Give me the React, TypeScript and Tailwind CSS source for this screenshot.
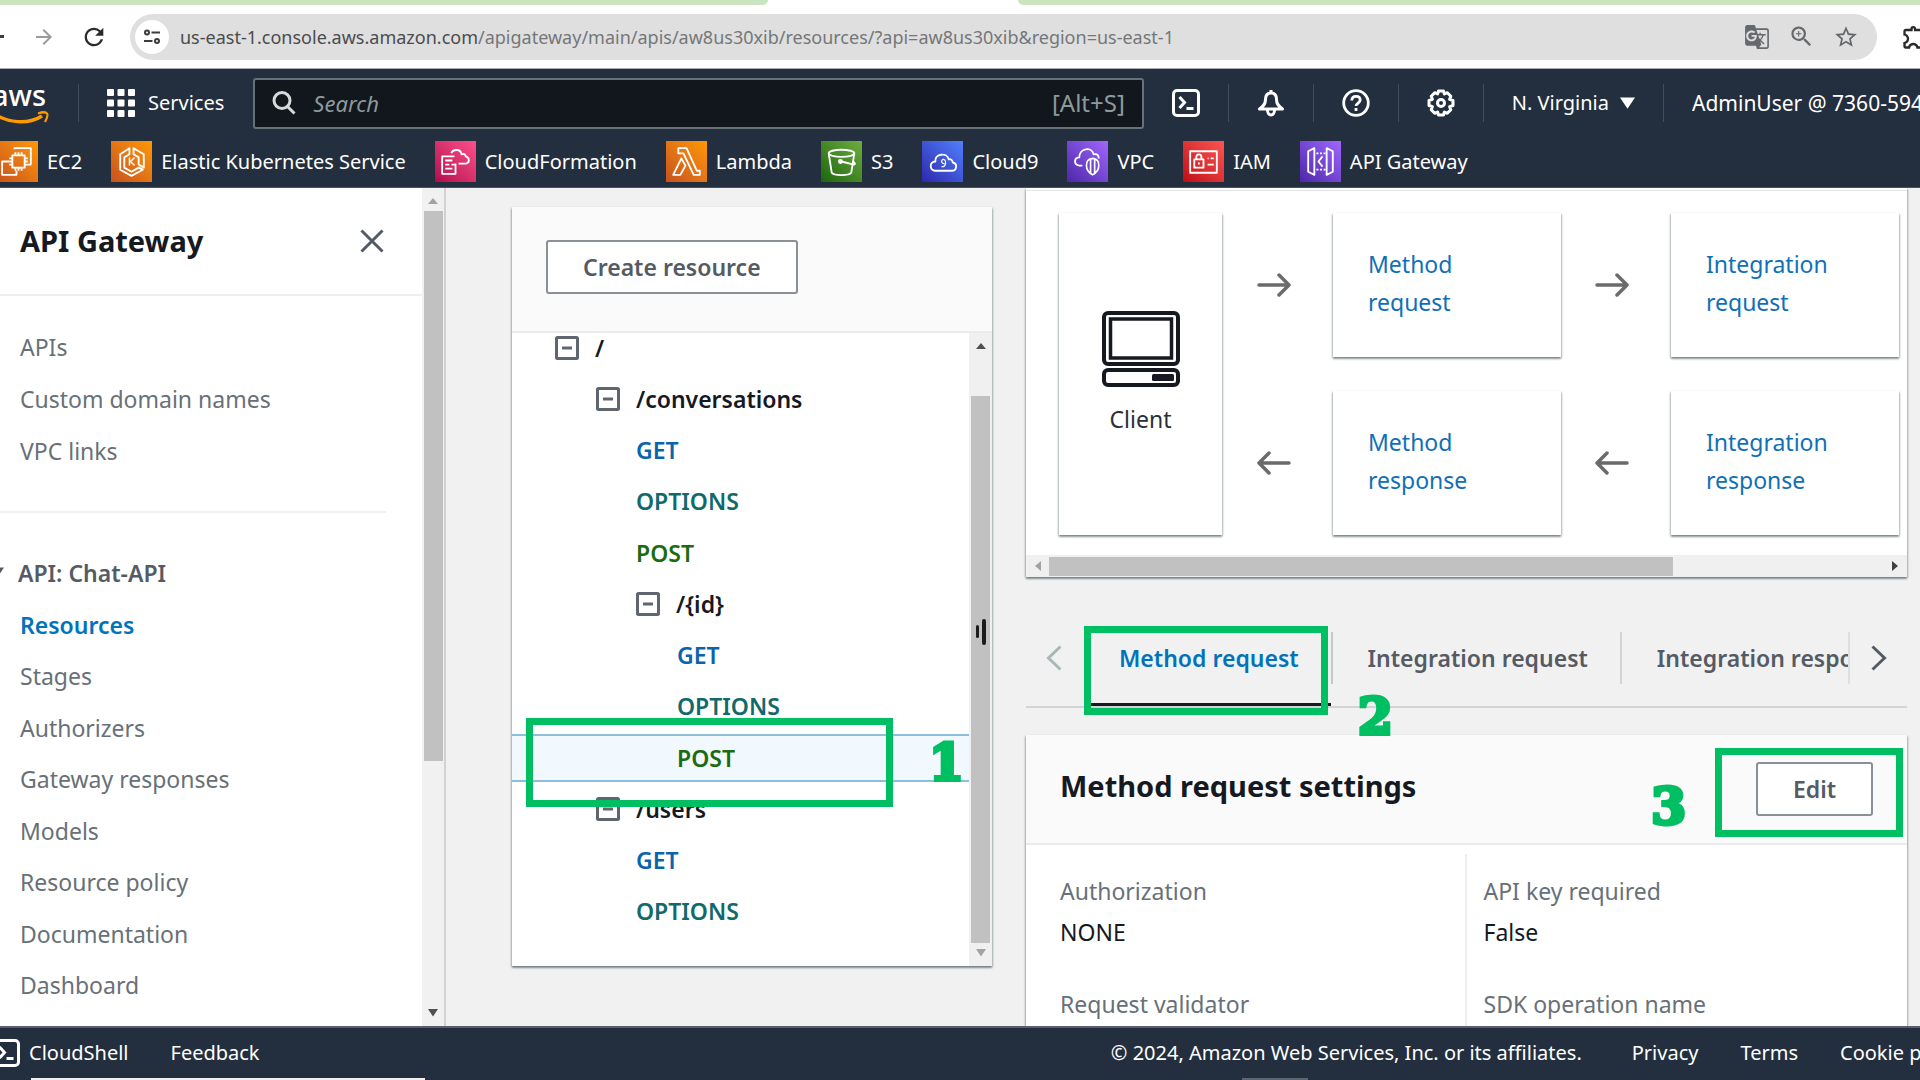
import React from 'react';
import {
  MdArrowForward,
  MdGTranslate,
  MdOutlineExtension,
  MdRefresh,
  MdStarOutline,
  MdZoomIn,
} from 'react-icons/md';

type IconProps = { className?: string };

/* ---------- icons ---------- */

const TuneIcon = () => (
  <svg viewBox="0 0 18 18" className="size-[18px]" fill="none" stroke="#3c3c3c" strokeWidth="2">
    <circle cx="4" cy="4.5" r="2" />
    <path d="M8.5 4.5H17" />
    <path d="M1 13h8.500" />
    <circle cx="14" cy="13" r="2" />
  </svg>
);

const ShellIcon = ({ className }: IconProps) => (
  <svg viewBox="0 0 28 28" className={className} fill="none" stroke="currentColor" strokeWidth="3">
    <rect x="1.500" y="1.500" width="25" height="25" rx="3.500" />
    <path d="M7.500 8l5 5.500-5 5.500" />
    <path d="M14.500 19.500h7" />
  </svg>
);

const BellIcon = () => (
  <svg viewBox="0 0 28 28" className="size-[28px]" fill="none" stroke="currentColor" strokeWidth="3" strokeLinejoin="round">
    <path d="M14 1v3" />
    <path d="M14 4c-4 0-5.500 3-5.500 6.500 0 4.500-2 6.500-6 9.500h23c-4-3-6-5-6-9.500C19.500 7 18 4 14 4z" />
    <path d="M10.500 21c0 3 1.500 5 3.500 5s3.500-2 3.500-5" />
  </svg>
);

const HelpIcon = () => (
  <svg viewBox="0 0 28 28" className="size-[28px]" fill="none" stroke="currentColor" strokeWidth="2.800">
    <circle cx="14" cy="14" r="12.300" />
    <path d="M9.800 11.500c0-2.500 1.700-4.200 4.200-4.200s4.200 1.500 4.200 3.800c0 2.900-4.200 3-4.200 6" />
    <path d="M14 19v3" />
  </svg>
);

const GearIcon = () => (
  <svg viewBox="0 0 28 28" className="size-[28px]" fill="none" stroke="currentColor" strokeWidth="3" strokeLinejoin="round">
    <path d="M11.500 2h5l.9 3 2.900-1.300 3.500 3.500L22.600 10.300l3.400 1.200v5l-3.400 1.200 1.200 3.100-3.500 3.500-2.900-1.300-.9 3h-5l-.9-3-2.900 1.300-3.500-3.500 1.200-3.100L2 16.500v-5l3.400-1.200-1.200-3.100 3.500-3.500L10.600 5z" />
    <circle cx="14" cy="14" r="3.500" />
  </svg>
);

const SearchIcon = () => (
  <svg viewBox="0 0 24 24" className="size-[24px] shrink-0" fill="none" stroke="#d5dbdb" strokeWidth="3">
    <circle cx="10" cy="9.500" r="8" />
    <path d="M15.500 15.500l7 7" />
  </svg>
);

const GridIcon = () => (
  <svg viewBox="0 0 28 28" className="size-[28px]" fill="currentColor">
    {[0, 10.500, 21].map((y) =>
      [0, 10.500, 21].map((x) => <rect key={`${x}-${y}`} x={x} y={y} width="7" height="7" rx="1" />),
    )}
  </svg>
);

const Caret = ({ dir, className }: { dir: 'up' | 'down' | 'left' | 'right'; className: string }) => {
  const d = {
    up: 'M0 8L5 2l5 6z',
    down: 'M0 1l5 7.500L10 1z',
    left: 'M8 0L2 5l6 5z',
    right: 'M2 0l6 5-6 5z',
  }[dir];
  return (
    <svg viewBox="0 0 10 10" className={className} fill="currentColor">
      <path d={d} />
    </svg>
  );
};

const Chevron = ({ flip }: { flip?: boolean }) => (
  <svg viewBox="0 0 16 26" className="h-[26px] w-[16px]" fill="none" stroke="currentColor" strokeWidth="3">
    <path d={flip ? 'M14.500 1.500L2.500 13l12 11.500' : 'M1.500 1.500l12 11.500-12 11.500'} />
  </svg>
);

const FlowArrow = ({ back }: { back?: boolean }) => (
  <svg viewBox="0 0 34 24" className="h-[24px] w-[34px]" fill="none" stroke="#6b6b6b" strokeWidth="3.500" strokeLinecap="round" strokeLinejoin="round">
    <path d={back ? 'M32 12H2M12 2L2 12l10 10' : 'M2 12h30M22 2l10 10-10 10'} />
  </svg>
);

const CollapseIcon = () => (
  <svg viewBox="0 0 24 24" className="size-[24px]" fill="none" stroke="#5f6670" strokeWidth="3">
    <rect x="1.500" y="1.500" width="21" height="21" rx="1" />
    <path d="M7 12h10" />
  </svg>
);

const ComputerIcon = () => (
  <svg viewBox="0 0 78 76" className="h-[76px] w-[78px]" fill="none" stroke="#16191f" strokeWidth="4">
    <rect x="2" y="2" width="74" height="51" rx="4" />
    <rect x="8.500" y="8" width="61" height="39" strokeWidth="3.500" />
    <rect x="2" y="59" width="74" height="15" rx="4" />
    <rect x="50" y="63" width="22" height="7" rx="1.500" fill="#16191f" stroke="none" />
  </svg>
);

const AwsLogo = () => (
  <span className="relative -ml-[8px] block h-[46px] w-[58px]">
    <span className="block text-[29px] leading-[30px] font-medium text-white">aws</span>
    <svg viewBox="0 0 58 14" className="absolute top-[31px] left-0 h-[14px] w-[58px]" fill="none" stroke="#ff9900">
      <path d="M1 2c14 10 35 12 49 3" strokeWidth="3.500" />
      <path d="M46 2.500c4-1.500 8-1.500 9 0s0 5-2 8.500" strokeWidth="2.200" />
    </svg>
  </span>
);

/* ---------- service shortcuts ---------- */

const services: { name: string; tile: string; art: React.ReactNode }[] = [
  {
    name: 'EC2',
    tile: 'from-[#c8511b] to-[#ff9900]',
    art: (
      <>
        <rect x="15" y="14" width="12" height="12" />
        <path d="M18 14v-3M21 14v-3M24 14v-3M18 29v-3M21 29v-3M24 29v-3M15 17h-3M15 20h-3M15 23h-3M30 17h-3M30 20h-3M30 23h-3" />
        <path d="M17 8V7h16v16h-3M12 20H5v13h14v-4" />
      </>
    ),
  },
  {
    name: 'Elastic Kubernetes Service',
    tile: 'from-[#c8511b] to-[#ff9900]',
    art: (
      <>
        <path d="M18 7L9 13v15l11 6 11-6-4-2-7 4-7-4V16l5-3z" />
        <path d="M22 7l10 6v13l-5-3v-7l-5-3z" />
        <path d="M18 16v8M23 16l-4 4 4 4" strokeWidth="1.400" />
      </>
    ),
  },
  {
    name: 'CloudFormation',
    tile: 'from-[#b0084d] to-[#ff4f8b]',
    art: (
      <>
        <path d="M19 15H7v17h13V22M10 19h7M10 23h4M10 27h7M16 23h3" />
        <path d="M16 12c1-4 9-5 10 1 3-1 4 1 4 2 4 1 4 7 0 7h-7" />
      </>
    ),
  },
  {
    name: 'Lambda',
    tile: 'from-[#c8511b] to-[#ff9900]',
    art: (
      <>
        <path d="M12 7h8l10 22h3v4h-6L17 12h-5z" />
        <path d="M15 17L7 33h7l5-9z" />
      </>
    ),
  },
  {
    name: 'S3',
    tile: 'from-[#1b660f] to-[#6cae3e]',
    art: (
      <>
        <ellipse cx="20" cy="12" rx="12.500" ry="3.500" />
        <path d="M7.500 12l3 19c2 3 17 3 19 0l3-19" />
        <path d="M20 20l12 3c2 0 1-2-1-3" />
        <circle cx="19" cy="20" r="1.500" fill="#fff" />
      </>
    ),
  },
  {
    name: 'Cloud9',
    tile: 'from-[#2e27ad] to-[#527fff]',
    art: (
      <>
        <path d="M13 29c-6 0-6-9 0-9-1-8 12-9 13-2 2-1 4 1 4 3 5 1 4 8-1 8z" />
        <path d="M22 22c-3 1-4-4-1-4s3 8-2 7" strokeWidth="1.200" />
      </>
    ),
  },
  {
    name: 'VPC',
    tile: 'from-[#4d27a8] to-[#a166ff]',
    art: (
      <>
        <path d="M15 24H12c-6-1-5-8 0-8 0-9 12-11 14-3 4-1 5 2 5 4" />
        <path d="M25 17c-5 1-6 3-6 7 0 5 2 7 6 9 4-2 6-4 6-9 0-4-1-6-6-7zM23 18v14M27 18v14" strokeWidth="1.600" />
      </>
    ),
  },
  {
    name: 'IAM',
    tile: 'from-[#bd0816] to-[#ff5252]',
    art: (
      <>
        <rect x="7" y="10" width="26" height="21" />
        <rect x="11" y="18" width="9" height="8" />
        <path d="M13 18v-2c0-4 5-4 5 0v2M15.500 21v2M24 17h1M27 17h3M24 23h6" />
      </>
    ),
  },
  {
    name: 'API Gateway',
    tile: 'from-[#4d27a8] to-[#a166ff]',
    art: (
      <>
        <path d="M14 7L8 10v20l6 3zM26 7l6 3v20l-6 3z" />
        <path d="M22 15l-4 5 4 5" />
        <path d="M16 12h9M16 28h9" strokeDasharray="2 1.500" />
      </>
    ),
  },
];

/* ---------- shared pieces ---------- */

const cardShadow =
  'shadow-[0_2px_2px_0_rgba(0,28,36,0.35),1px_1px_2px_0_rgba(0,28,36,0.2),-1px_1px_2px_0_rgba(0,28,36,0.2)]';

const NavDivider = () => <span className="h-[38px] w-px bg-[#414d5c]" />;

const Marker = ({ n, className }: { n: number; className: string }) => (
  <span
    className={`pointer-events-none absolute z-20 font-['DejaVu_Serif',serif] text-[50px] leading-[40px] font-bold text-[#00bf63] [-webkit-text-stroke:4px_#00bf63] ${className}`}
  >
    {n}
  </span>
);

const Frame = ({ className }: { className: string }) => (
  <span className={`pointer-events-none absolute z-20 border-[7px] border-[#00bf63] ${className}`} />
);

/* ---------- page data ---------- */

const topLinks = ['APIs', 'Custom domain names', 'VPC links'];
const apiLinks = [
  'Resources',
  'Stages',
  'Authorizers',
  'Gateway responses',
  'Models',
  'Resource policy',
  'Documentation',
  'Dashboard',
];

type Node = { label: string; level: 0 | 1 | 2 | 3; selected?: boolean };
const tree: Node[] = [
  { label: '/', level: 0 },
  { label: '/conversations', level: 1 },
  { label: 'GET', level: 2 },
  { label: 'OPTIONS', level: 2 },
  { label: 'POST', level: 2 },
  { label: '/{id}', level: 2 },
  { label: 'GET', level: 3 },
  { label: 'OPTIONS', level: 3 },
  { label: 'POST', level: 3, selected: true },
  { label: '/users', level: 1 },
  { label: 'GET', level: 2 },
  { label: 'OPTIONS', level: 2 },
];
const indent = ['pl-[43px]', 'pl-[84px]', 'pl-[124px]', 'pl-[165px]'];
const methodColor: Record<string, string> = {
  GET: 'text-[#0a63ad]',
  OPTIONS: 'text-[#12696b]',
  POST: 'text-[#1d6b0f]',
};

/* ---------- sections ---------- */

const BrowserBar = () => (
  <div className="shrink-0 border-b border-[#a9adb1] bg-white">
    <div className="flex h-[5px] justify-between">
      <span className="w-2/5 rounded-br-lg bg-[#c9e4bf]" />
      <span className="w-[47%] rounded-bl-lg bg-[#c9e4bf]" />
    </div>
    <div className="flex h-[63px] items-center">
      <button aria-label="Back" className="h-[3px] w-[4px] bg-[#3c3c3c]" />
      <button aria-label="Forward" className="ml-[28px] text-[#9a9a9a]">
        <MdArrowForward className="size-[24px]" />
      </button>
      <button aria-label="Reload" className="ml-[24px] text-[#2b2b2b]">
        <MdRefresh className="size-[28px]" />
      </button>
      <div className="ml-[22px] flex h-[46px] flex-1 items-center rounded-full bg-[#dfdfdf] pr-[18px] pl-[5px]">
        <button aria-label="Site information" className="grid size-[34px] place-items-center rounded-full bg-white">
          <TuneIcon />
        </button>
        <span className="ml-[11px] flex-1 text-[18px] whitespace-nowrap text-[#74777a]">
          <span className="text-[#4a4c4e]">us-east-1.console.aws.amazon.com</span>
          /apigateway/main/apis/aw8us30xib/resources/?api=aw8us30xib&amp;region=us-east-1
        </span>
        <span className="flex items-center gap-[18px] text-[#66696c]">
          <button aria-label="Translate"><MdGTranslate className="size-[26px]" /></button>
          <button aria-label="Zoom"><MdZoomIn className="size-[27px]" /></button>
          <button aria-label="Bookmark"><MdStarOutline className="size-[26px]" /></button>
        </span>
      </div>
      <div className="w-[43px] overflow-hidden pl-[24px] text-[#2b2b2b]">
        <MdOutlineExtension className="size-[28px]" />
      </div>
    </div>
  </div>
);

const ConsoleNav = () => (
  <header className="shrink-0 overflow-hidden border-b border-[#4a5563] bg-[#232f3e] text-[20px] text-white">
    <div className="flex h-[68px] items-center">
      <a href="#home" aria-label="AWS home"><AwsLogo /></a>
      <span className="ml-[28px] flex"><NavDivider /></span>
      <button className="ml-[28px] flex items-center gap-[13px]">
        <GridIcon />
        Services
      </button>
      <label className="ml-[29px] flex h-[51px] flex-1 items-center rounded-[3px] border-2 border-[#687078] bg-[#12161d] px-[17px]">
        <SearchIcon />
        <input
          type="search"
          aria-label="Search"
          placeholder="Search"
          className="ml-[17px] min-w-0 flex-1 bg-transparent text-[22px] italic outline-none placeholder:text-[#8d9a9a]"
        />
        <span className="text-[24px] text-[#8d9a9a]">[Alt+S]</span>
      </label>
      <div className="flex items-center gap-[28px] pl-[28px]">
        <button aria-label="CloudShell"><ShellIcon className="block size-[28px]" /></button>
        <NavDivider />
        <button aria-label="Notifications"><BellIcon /></button>
        <NavDivider />
        <button aria-label="Support"><HelpIcon /></button>
        <NavDivider />
        <button aria-label="Settings"><GearIcon /></button>
        <NavDivider />
        <button className="flex items-center gap-[11px] whitespace-nowrap">
          N. Virginia
          <Caret dir="down" className="size-[15px]" />
        </button>
        <NavDivider />
        <button className="w-[228px] overflow-hidden text-left text-[21px] whitespace-nowrap">
          AdminUser @ 7360-5948
        </button>
      </div>
    </div>
    <nav className="-ml-[3px] flex h-[50px] items-center gap-[29px] pb-[1px]">
      {services.map((s) => (
        <a key={s.name} href="#service" className="flex items-center gap-[9px] whitespace-nowrap">
          <span className={`block size-[41px] bg-linear-to-tr ${s.tile}`}>
            <svg viewBox="0 0 40 40" className="size-full" fill="none" stroke="#fff" strokeWidth="1.800" strokeLinejoin="round">
              {s.art}
            </svg>
          </span>
          {s.name}
        </a>
      ))}
    </nav>
  </header>
);

const Sidebar = () => (
  <aside className="flex w-[446px] shrink-0 border-r-2 border-[#d2d2d2] bg-white text-[#687078]">
    <div className="flex flex-1 flex-col">
      <div className="flex h-[108px] shrink-0 items-center justify-between border-b-2 border-[#efefef] pr-[38px] pl-[20px]">
        <h2 className="text-[29px] font-bold text-[#16191f]">API Gateway</h2>
        <button aria-label="Close navigation" className="text-[#545b64]">
          <svg viewBox="0 0 24 24" className="size-[24px]" fill="none" stroke="currentColor" strokeWidth="3">
            <path d="M1.500 1.500l21 21M22.500 1.500l-21 21" />
          </svg>
        </button>
      </div>
      <ul className="mr-[36px] shrink-0 border-b-2 border-[#efefef] pt-[25px] pb-[34px] pl-[20px] leading-[52px]">
        {topLinks.map((l) => (
          <li key={l}><a href="#link">{l}</a></li>
        ))}
      </ul>
      <button className="mt-[34px] -ml-[10px] flex h-[52px] shrink-0 items-center gap-[14px] font-semibold text-[#545b64]">
        <Caret dir="down" className="size-[14px]" />
        API: Chat-API
      </button>
      <ul className="flex flex-1 flex-col pb-[15px] pl-[20px]">
        {apiLinks.map((l, i) => (
          <li key={l} className="flex flex-1 items-center">
            <a href="#link" className={i === 0 ? 'font-semibold text-[#0073bb]' : ''}>{l}</a>
          </li>
        ))}
      </ul>
    </div>
    <div className="flex w-[22px] flex-col items-center bg-[#f1f1f1] py-[8px]">
      <Caret dir="up" className="size-[10px] text-[#a3a3a3]" />
      <div className="mt-[5px] h-[550px] w-[19px] bg-[#c1c1c1]" />
      <Caret dir="down" className="mt-auto size-[10px] text-[#505050]" />
    </div>
  </aside>
);

const ResourceTree = () => (
  <section className={`mt-[19px] mb-[60px] ml-[66px] flex w-[480px] shrink-0 flex-col bg-white ${cardShadow}`}>
    <div className="h-[126px] shrink-0 border-b-2 border-[#ebebeb] bg-[#fafafa] px-[34px] pt-[33px]">
      <button className="h-[54px] rounded-[3px] border-2 border-[#8b9096] bg-white px-[35px] font-semibold text-[#545b64]">
        Create resource
      </button>
    </div>
    <div className="relative flex min-h-0 flex-1">
      <ul className="-mt-[11px] flex flex-1 flex-col pb-[29px] font-semibold">
        {tree.map((n, i) => (
          <li key={i} className="relative flex flex-1 items-center">
            <div
              className={`flex h-[48px] w-full items-center gap-[16px] ${indent[n.level]} ${
                n.selected ? 'border-y-2 border-[#8dbede] bg-[#f1f8fe]' : ''
              }`}
            >
              {n.label.startsWith('/') && (
                <button aria-label={`Collapse ${n.label}`}><CollapseIcon /></button>
              )}
              <a href="#node" className={methodColor[n.label] ?? 'text-[#16191f]'}>{n.label}</a>
            </div>
            {n.selected && (
              <>
                <Frame className="-top-[14px] left-[14px] h-[89px] w-[367px]" />
                <Marker n={1} className="top-[11px] left-[417px]" />
              </>
            )}
          </li>
        ))}
      </ul>
      <div className="flex w-[23px] flex-col items-center bg-[#f0f0f0] py-[8px]">
        <Caret dir="up" className="size-[10px] text-[#505050]" />
        <div className="mt-[45px] flex w-[19px] flex-1 items-center justify-center gap-[3px] bg-[#c1c1c1] pb-[76px]">
          <span className="h-[13px] w-[3px] rounded-sm bg-[#1c1c1c]" />
          <span className="h-[26px] w-[4px] rounded-sm bg-[#1c1c1c]" />
        </div>
        <Caret dir="down" className="mt-[5px] size-[10px] text-[#a3a3a3]" />
      </div>
    </div>
  </section>
);

const StepCard = ({ first, second }: { first: string; second: string }) => (
  <a
    href="#step"
    className={`flex h-[144px] w-[228px] shrink-0 flex-col justify-center bg-white pb-[4px] pl-[35px] leading-[38px] text-[#0f70b7] ${cardShadow}`}
  >
    <span>{first}</span>
    <span>{second}</span>
  </a>
);

const Arrows = ({ className }: { className: string }) => (
  <div className={`flex shrink-0 flex-col items-center gap-[34px] ${className}`}>
    <span className="flex h-[144px] items-center"><FlowArrow /></span>
    <span className="flex h-[144px] items-center"><FlowArrow back /></span>
  </div>
);

const MethodExecution = () => (
  <section className={`flex shrink-0 flex-col bg-white ${cardShadow}`}>
    <div className="h-[3px] border-b border-[#e3e6e8]" />
    <div className="flex overflow-hidden px-[33px] pt-[22px] pb-[20px]">
      <div className={`flex w-[163px] shrink-0 flex-col items-center justify-center bg-white pb-[2px] text-[#2b2f36] ${cardShadow}`}>
        <ComputerIcon />
        <span className="mt-[16px]">Client</span>
      </div>
      <Arrows className="w-[111px] pr-[7px]" />
      <div className="flex flex-col gap-[34px]">
        <StepCard first="Method" second="request" />
        <StepCard first="Method" second="response" />
      </div>
      <Arrows className="w-[110px] pr-[9px]" />
      <div className="flex flex-col gap-[34px]">
        <StepCard first="Integration" second="request" />
        <StepCard first="Integration" second="response" />
      </div>
    </div>
    <div className="flex h-[22px] items-center justify-between bg-[#f0f0f0] px-[7px]">
      <Caret dir="left" className="size-[10px] text-[#a3a3a3]" />
      <span className="mr-auto ml-[6px] h-[19px] w-[72%] bg-[#c1c1c1]" />
      <Caret dir="right" className="size-[10px] text-[#404040]" />
    </div>
  </section>
);

const Tabs = () => (
  <div className="relative mt-[32px] flex h-[99px] shrink-0 border-b-2 border-[#d2d5d6] font-semibold text-[#545b64]">
    <button aria-label="Previous tabs" className="flex w-[58px] shrink-0 items-center pl-[20px] text-[#aab7b8]">
      <Chevron flip />
    </button>
    <div role="tablist" className="flex min-w-0 flex-1 items-center overflow-hidden whitespace-nowrap">
      <button role="tab" aria-selected="true" className="relative h-full pr-[32px] pl-[35px] text-[#0073bb]">
        Method request
        <span className="absolute right-0 bottom-0 left-[6px] h-[3px] bg-[#16191f]" />
      </button>
      <span className="h-[52px] w-[2px] shrink-0 bg-[#c3c8c8]" />
      <button role="tab" aria-selected="false" className="h-full pr-[32px] pl-[35px]">Integration request</button>
      <span className="h-[52px] w-[2px] shrink-0 bg-[#d0d4d4]" />
      <button role="tab" aria-selected="false" className="h-full pr-[32px] pl-[35px]">Integration response</button>
    </div>
    <span className="h-[52px] w-[2px] shrink-0 self-center bg-[#dde0e0]" />
    <button aria-label="Next tabs" className="flex w-[57px] shrink-0 items-center pl-[21px]">
      <Chevron />
    </button>
    <Frame className="top-[17px] left-[58px] h-[89px] w-[244px]" />
    <Marker n={2} className="top-[88px] left-[332px]" />
  </div>
);

const Field = ({ label, value }: { label: string; value?: string }) => (
  <div className="pb-[31px] leading-[41px]">
    <dt className="text-[#687078]">{label}</dt>
    {value && <dd className="text-[#16191f]">{value}</dd>}
  </div>
);

const Settings = () => (
  <section className={`mt-[27px] flex min-h-0 flex-1 flex-col bg-white ${cardShadow}`}>
    <div className="relative flex h-[110px] shrink-0 items-center justify-between border-b-2 border-[#ebebeb] bg-[#fafafa] px-[34px]">
      <h2 className="pb-[6px] text-[29px] font-bold text-[#16191f]">Method request settings</h2>
      <button className="h-[54px] rounded-[3px] border-2 border-[#8b9096] bg-white px-[35px] font-semibold text-[#545b64]">
        Edit
      </button>
      <Frame className="top-[13px] right-[4px] h-[89px] w-[188px]" />
      <Marker n={3} className="top-[52px] right-[221px]" />
    </div>
    <div className="grid min-h-0 flex-1 grid-cols-2 overflow-hidden pt-[9px] pr-[38px] pl-[34px]">
      <dl className="pt-[17px]">
        <Field label="Authorization" value="NONE" />
        <Field label="Request validator" />
      </dl>
      <dl className="border-l-2 border-[#eeeeee] pt-[17px] pl-[17px]">
        <Field label="API key required" value="False" />
        <Field label="SDK operation name" />
      </dl>
    </div>
  </section>
);

const Footer = () => (
  <footer className="relative z-30 flex h-[54px] shrink-0 flex-col overflow-hidden border-t-2 border-[#56616d] bg-[#232f3e] text-[20px] whitespace-nowrap text-white">
    <div className="flex flex-1 items-center">
      <button className="-ml-[8px] flex items-center gap-[9px]">
        <ShellIcon className="size-[28px]" />
        CloudShell
      </button>
      <a href="#feedback" className="ml-[42px]">Feedback</a>
      <span className="mr-[50px] ml-auto">© 2024, Amazon Web Services, Inc. or its affiliates.</span>
      <a href="#privacy" className="mr-[42px]">Privacy</a>
      <a href="#terms" className="mr-[42px]">Terms</a>
      <a href="#cookies" className="w-[80px] overflow-hidden">Cookie preferences</a>
    </div>
    <div className="flex h-[2px]">
      <span className="ml-[31px] w-[394px] bg-[#eef0f2]" />
      <span className="ml-[817px] w-[66px] bg-[#5d6570]" />
    </div>
  </footer>
);

export default function App() {
  return (
    <div className="flex h-screen flex-col overflow-hidden bg-[#f1f1f1] font-['Noto_Sans','Open_Sans',sans-serif] text-[23px] leading-[32px]">
      <BrowserBar />
      <ConsoleNav />
      <div className="flex min-h-0 flex-1 overflow-hidden">
        <Sidebar />
        <ResourceTree />
        <main className="mr-[13px] ml-[34px] flex min-w-0 flex-1 flex-col">
          <MethodExecution />
          <Tabs />
          <Settings />
        </main>
      </div>
      <Footer />
    </div>
  );
}
